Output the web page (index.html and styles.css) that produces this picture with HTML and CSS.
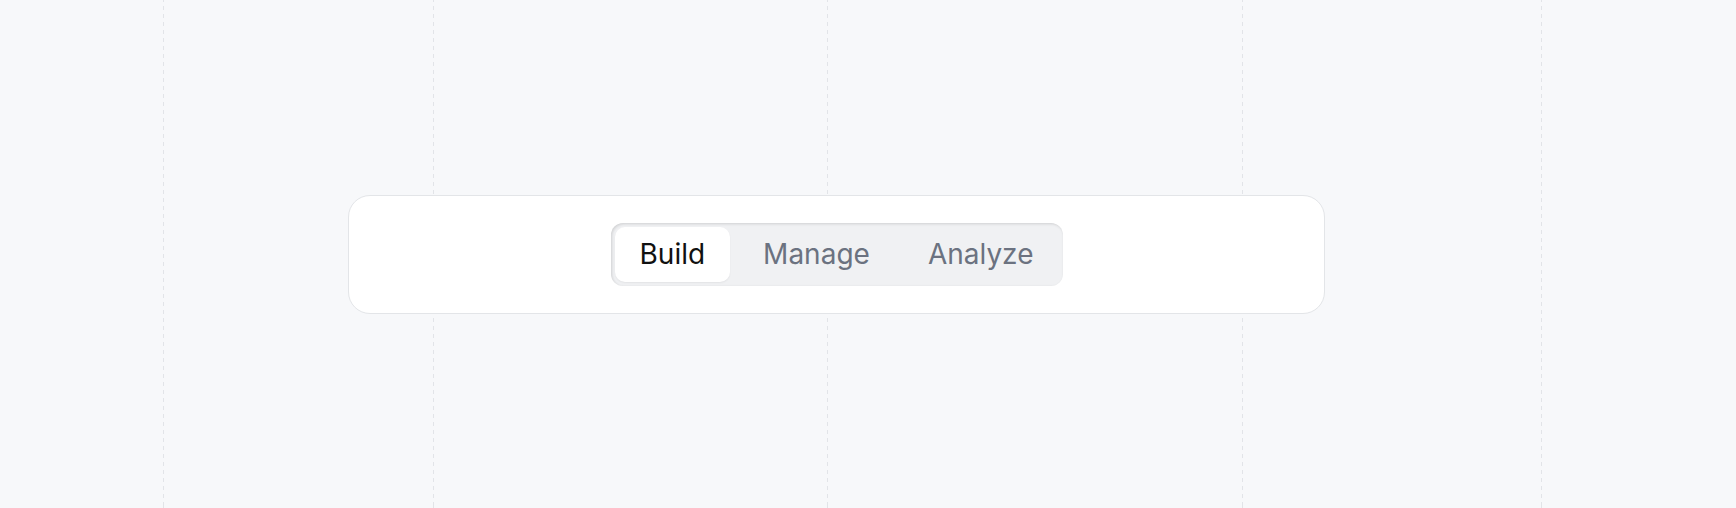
FILE: index.html
```html
<!DOCTYPE html>
<html lang="en">
<head>
  <meta charset="UTF-8" />
  <meta name="viewport" content="width=device-width, initial-scale=1.0"/>
  <title>Segmented Tabs</title>
  <link rel="stylesheet" href="styles.css">
</head>
<body>

<!-- background guide lines -->
<div class="guides">
  <div class="guide guide-a"></div>
  <div class="guide guide-b"></div>
  <div class="guide guide-c"></div>
  <div class="guide guide-d"></div>
  <div class="guide guide-e"></div>
</div>

<div class="stage">
  <div class="card">
    <div class="tabs">
      <div class="tab active">Build</div>
      <div class="tab">Manage</div>
      <div class="tab">Analyze</div>
    </div>
  </div>
</div>

</body>
</html>
```

FILE: styles.css
```css
body {
  margin: 0;
  font-family: Inter, "Noto Sans", sans-serif;
  background-color: #f7f8fa;
}

.guides {
  position: absolute;
  top: 0;
  left: 0;
  width: 100%;
  height: 508px;
  pointer-events: none;
}

.guide {
  position: absolute;
  top: 0;
  bottom: 0;
  width: 1px;
  background: repeating-linear-gradient(to bottom, #e2e4e8 0, #e2e4e8 4px, transparent 4px, transparent 8px);
  background-position: 0 -2px;
}

.guide-a { left: 163px; }
.guide-b { left: 433px; }
.guide-c { left: 827px; }
.guide-d { left: 1242px; }
.guide-e { left: 1541px; }

.stage {
  position: relative;
  min-height: 508px;
  display: flex;
  align-items: center;
  padding-left: 348px;
  box-sizing: border-box;
}

.card {
  width: 977px;
  box-sizing: border-box;
  padding: 27px 0;
  background: white;
  border: 1px solid #e3e5e8;
  border-radius: 22px;
  display: flex;
  justify-content: center;
}

.tabs {
  display: flex;
  gap: 8px;
  padding: 4px;
  background: #f0f1f3;
  border-radius: 12px;
  box-shadow: inset 1px 1px 3px rgba(0, 0, 0, 0.14);
}

.tab {
  padding: 12px 25px;
  line-height: 31px;
  font-size: 28px;
  color: #6b7280;
  border-radius: 10px;
  cursor: pointer;
}

.tab.active {
  background: white;
  color: #111111;
  box-shadow: 0 1px 2px rgba(0, 0, 0, 0.06);
}
```
